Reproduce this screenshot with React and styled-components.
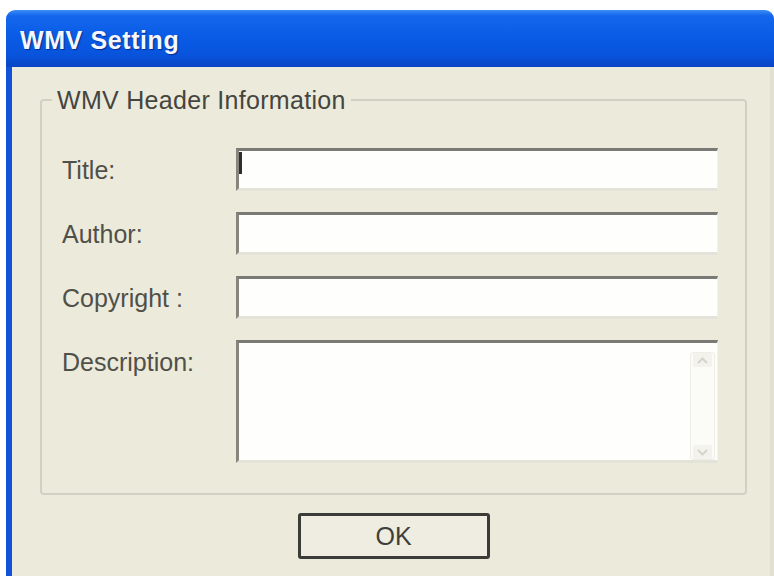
import styled, { createGlobalStyle } from 'styled-components';

const GlobalStyle = createGlobalStyle`
    html, body {
        margin: 0;
        background: #ffffff;
        font-family: "Liberation Sans", Arial, sans-serif;
    }
`;

const Page = styled.div`
    box-sizing: border-box;
    height: 576px;
    padding: 10px 0 0 6px;
    overflow: hidden;
`;

const Window = styled.div`
    width: 768px;
    height: 566px;
    display: flex;
    flex-direction: column;
`;

const TitleBar = styled.div`
    height: 57px;
    flex-shrink: 0;
    display: flex;
    align-items: center;
    padding: 3px 0 0 14px;
    box-sizing: border-box;
    border-radius: 9px 9px 0 0;
    background: linear-gradient(
        to bottom,
        #3d8ef6 0%,
        #1467ec 10%,
        #0a5ce6 45%,
        #0853dc 80%,
        #0a44c4 100%
    );
    color: #f4f7ff;
    font-size: 25px;
    font-weight: bold;
    text-shadow: 1px 1px 1px #0b2a88;
    letter-spacing: 0.6px;
`;

const Body = styled.div`
    flex: 1;
    display: flex;
    flex-direction: column;
    background: #eceadb;
    border-left: 6px solid #1052d8;
    border-right: 4px solid #e2e0d0;
    padding: 19px 23px 0 28px;
`;

const GroupBox = styled.fieldset`
    margin: 0;
    border: 2px solid #d2d0c2;
    border-radius: 4px;
    padding: 34px 27px 30px 20px;
    display: flex;
    flex-direction: column;
    gap: 21px;
`;

const Legend = styled.legend`
    margin-left: -10px;
    padding: 0 5px;
    font-size: 25px;
    line-height: 28px;
    color: #45453f;
    letter-spacing: 0.3px;
`;

const Row = styled.div`
    display: grid;
    grid-template-columns: 174px 482px;
    align-items: ${p => (p.$top ? 'start' : 'center')};
`;

const Label = styled.label`
    font-size: 25px;
    line-height: 30px;
    color: #50504a;
    margin-top: ${p => (p.$top ? '7px' : '0')};
`;

const TextBox = styled.div`
    box-sizing: border-box;
    height: ${p => p.$height || 43}px;
    display: flex;
    justify-content: ${p => (p.$scroll ? 'flex-end' : 'flex-start')};
    align-items: flex-start;
    background: #fefefc;
    border-top: 3px solid #7a7973;
    border-left: 3px solid #86857e;
    border-right: 1px solid #f3f2ea;
    border-bottom: 3px solid #e4e3d9;
    padding: ${p => (p.$scroll ? '9px 2px 0 0' : '0')};
`;

const Caret = styled.span`
    width: 3px;
    height: 22px;
    margin-top: 1px;
    background: #2e2e2c;
`;

const ScrollBar = styled.div`
    box-sizing: border-box;
    width: 25px;
    height: 108px;
    display: flex;
    flex-direction: column;
    justify-content: space-between;
    align-items: center;
    border: 1px solid #eeede6;
    border-radius: 3px;
    background: #fbfbf7;
`;

const ScrollArrow = styled.div`
    width: 19px;
    height: 14px;
    display: flex;
    align-items: center;
    justify-content: center;
    border-radius: 2px;
    background: #f3f2ec;
`;

const Footer = styled.div`
    display: flex;
    justify-content: center;
    padding-top: 18px;
`;

const Button = styled.button`
    width: 192px;
    height: 46px;
    border: 3px solid #3b3b37;
    border-radius: 3px;
    background: #efede1;
    font-family: "Liberation Sans", Arial, sans-serif;
    font-size: 25px;
    color: #3f3f3b;
    padding: 0;
`;

function Arrow({ up }) {
    return (
        <ScrollArrow>
            <svg width="11" height="7" viewBox="0 0 11 7">
                <path
                    d={up ? 'M1 6 L5.5 1.5 L10 6' : 'M1 1 L5.5 5.5 L10 1'}
                    fill="none"
                    stroke="#d4d4cc"
                    strokeWidth="2"
                />
            </svg>
        </ScrollArrow>
    );
}

const fields = [
    { label: 'Title:', caret: true },
    { label: 'Author:' },
    { label: 'Copyright :' },
];

function App() {
    return (
        <Page>
            <GlobalStyle />
            <Window>
                <TitleBar>WMV Setting</TitleBar>
                <Body>
                    <GroupBox>
                        <Legend>WMV Header Information</Legend>
                        {fields.map(f => (
                            <Row key={f.label}>
                                <Label>{f.label}</Label>
                                <TextBox>{f.caret && <Caret />}</TextBox>
                            </Row>
                        ))}
                        <Row $top>
                            <Label $top>Description:</Label>
                            <TextBox $height={123} $scroll>
                                <ScrollBar>
                                    <Arrow up />
                                    <Arrow />
                                </ScrollBar>
                            </TextBox>
                        </Row>
                    </GroupBox>
                    <Footer>
                        <Button>OK</Button>
                    </Footer>
                </Body>
            </Window>
        </Page>
    );
}

export default App;
